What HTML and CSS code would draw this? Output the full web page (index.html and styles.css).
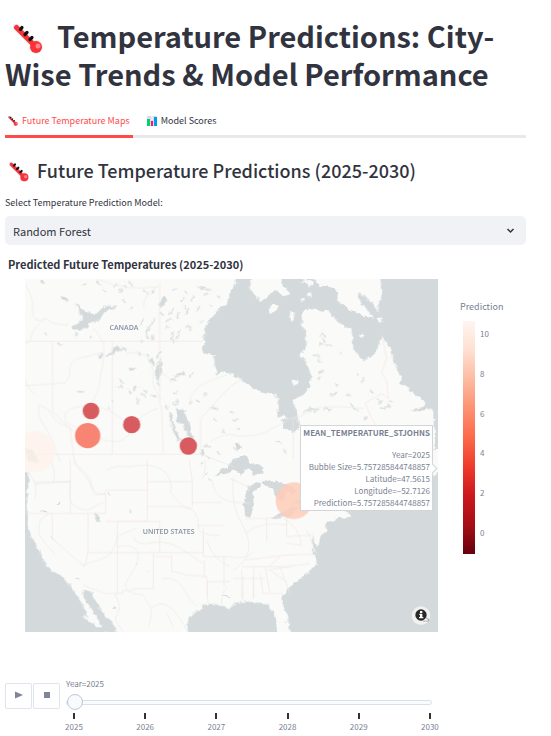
FILE: index.html
```html
<!DOCTYPE html>
<html lang="en">
<head>
<meta charset="utf-8">
<meta name="viewport" content="width=device-width, initial-scale=1">
<title>Temperature Predictions</title>
<link rel="stylesheet" href="styles.css">
</head>
<body>
<svg class="defs" width="0" height="0" aria-hidden="true">
  <symbol id="thermo" viewBox="0 0 30 30">
    <path d="M3 3L23 23" stroke="#ececee" stroke-width="7" stroke-linecap="round"/>
    <circle cx="23" cy="23" r="7" fill="#ececee"/>
    <path d="M3.500 3.500L23 23" stroke="#fa3138" stroke-width="5" stroke-linecap="round"/>
    <circle cx="23" cy="23" r="6" fill="#fa3138"/>
    <circle cx="25" cy="22" r="2.500" fill="#ff8389"/>
    <path d="M7.500 5.500l1.500-2M12 10.500l2-2M17 15.500l2-2" stroke="#111" stroke-width="3.200" stroke-linecap="round"/>
  </symbol>
</svg>
<main class="page">
  <h1 class="title"><svg class="title-icon" aria-hidden="true"><use href="#thermo"/></svg>Temperature Predictions: City-Wise Trends &amp; Model Performance</h1>

  <nav class="tabs" role="tablist">
    <button class="tab active" role="tab" aria-selected="true"><svg class="tab-icon" aria-hidden="true"><use href="#thermo"/></svg>Future Temperature Maps</button>
    <button class="tab" role="tab" aria-selected="false"><svg class="tab-icon" viewBox="0 0 10 10" aria-hidden="true"><path d="M0 0h10v10H0z" fill="#ded8e8"/><path d="M0 3h3v7H0z" fill="#00d26a"/><path d="M4 5h2v5H4z" fill="#f8117f"/><path d="M7 1h3v9H7z" fill="#009fe8"/><path d="M5 0v4" stroke="#fff"/></svg>Model Scores</button>
  </nav>

  <h2 class="section"><svg class="section-icon" aria-hidden="true"><use href="#thermo"/></svg>Future Temperature Predictions (2025-2030)</h2>

  <label class="field-label" for="model">Select Temperature Prediction Model:</label>
  <div class="select-wrap">
    <select id="model" class="select"><option>Random Forest</option></select>
    <svg class="chevron" viewBox="0 0 8 6" aria-hidden="true"><path d="M1 1l3 3 3-3" fill="none" stroke="#31333f" stroke-width="1.500"/></svg>
  </div>

  <h3 class="chart-title">Predicted Future Temperatures (2025-2030)</h3>
  <div class="chart">
    <div class="map">
      <svg class="map-art" viewBox="0 0 1239 1059" role="img" aria-label="Map of North America">
        <defs>
          <filter id="coast" x="0" y="0" width="1239" height="1059" filterUnits="userSpaceOnUse" color-interpolation-filters="sRGB">
            <feTurbulence type="fractalNoise" baseFrequency=".06" numOctaves="3" seed="4"/>
            <feDisplacementMap in="SourceGraphic" scale="16" xChannelSelector="R" yChannelSelector="G"/>
          </filter>
        </defs>
        <path d="M0 0H1239V1059H0z" fill="#fafaf8"/>
        <path d="M1225 0h14v420h-14zM1225 620h14v439h-14zM0 700h8v359H0zM0 1045h240v14H0zM820 1045h419v14H820z" class="water"/>
        <g filter="url(#coast)">
          <!-- Hudson Bay, Labrador Sea and Atlantic -->
          <g transform="translate(585 -12)">
            <path class="water" d="M45 0L48 25 30 50 22 85 0 100-20 120-40 150-50 185-52 235-20 240-10 298 20 290 50 305 80 325 110 345 165 360 175 372 172 420 190 445 215 475 230 465 237 450 230 410 218 375 250 360 270 335 274 300 260 265 240 240 258 215 258 180 247 150 245 120 258 103 290 105 325 108 345 130 365 150 395 165 400 220 430 258 450 245 470 230 485 180 510 220 520 260 545 310 540 325 575 350 615 380 608 395 570 412 630 400 644 410 644 500 640 600 560 640 480 660 385 700 380 712 390 727 350 730 320 745 318 765 300 790 292 820 286 800 275 785 278 820 290 865 265 895 235 915 205 940 188 965 190 995 205 1025 212 1100H700V0z"/>
            <path class="land" d="M102 0H180L192 35 207 50 195 65 165 45 145 62 120 82 108 60 95 50 85 35zM270 0H480L488 72 475 80 475 110 455 85 430 60 410 55 430 90 462 128 420 120 385 100 360 85 350 72 356 50 330 35 300 32zM143 102L160 86 177 88 170 105 150 117zM208 130L212 107 223 115 220 138zM262 58l8-4 2 12-7 2zM240 70l10-4 6 9-8 5zM242 18l30-4 10 12-12 12-8-10zM-10 0H50L40 25 14 35 22 75 0 93zM215 320l12-5 9 8-15 12zM420 178l8-4 2 10-8 5zM474 130l9-3 1 14-7 3zM175 428l18-7 7 10-6 8zM625 525L665 520V590L640 600z"/>
          </g>
          <!-- Pacific, Gulf of California and Gulf of Mexico -->
          <g class="water" transform="translate(-75 543)">
            <path d="M50 25L87 35 85 80 79 120 80 200 90 220 100 245 120 270 130 300 150 330 180 345 205 365 215 385 240 420 262 460 265 470 245 472 280 490 300 516 305 530H50zM250 390L275 395 290 430 310 460 345 500 350 530H320L290 470 265 435 250 410zM565 530L562 490 572 468 590 455 605 440 630 430 660 435 690 445 708 428 735 424 770 428 805 434 820 470 832 516 834 540zM75 -5L95 -25 110 -8 100 8 85 -2z"/>
            <path d="M565 530L562 485 600 450 820 450 840 530z"/>
          </g>
          <!-- Great Lakes -->
          <g class="water" transform="translate(585 423)">
            <path d="M-15 165L20 140 45 118 60 107 82 110 92 130 130 142 130 162 100 164 85 145 60 165 42 148 15 162zM75 290L72 240 85 200 112 187 125 190 100 218 100 268 90 290zM125 180L170 185 205 195 235 215 215 220 200 210 188 245 168 232 155 205 125 190zM150 292L180 280 220 265 242 260 205 290 165 298zM225 245L265 230 275 243 240 253zM190 0L210 5 235 25 225 38 205 35 190 20zM45 70l15-2 2 20-10 5z"/>
          </g>
          <!-- Inland lakes -->
          <g class="water" transform="translate(-75 -12)">
            <path d="M216 158L240 140 246 124 222 82 252 108 285 120 315 92 352 95 342 102 318 105 295 138 268 142 265 155 240 167 220 164zM315 244L340 220 352 210 358 218 385 222 350 230 325 244zM530 400L545 402 560 420 575 480 578 496 562 484 550 450 535 440 530 420zM505 410l10 5 8 40 20 40-8 4-18-35zM480 75l14-12 8 10-10 18-14 4zM465 300l8-28 12-12-3 40-10 20zM182 68l14-4 12 8-5 8zM448 252l10-4 6 25-10-8zM295 240l10-5 2 15-8 5zM385 285l10-10 12 4-10 10zM585 34l30 4 24 10-26-3zM535 300l14-15 4 10-12 8zM225 348l26 0-2 5-18-2zM75 520l20 5 20 30-10 10-28-30zM280 712l15 10 7 20-14-8zM600 525l10-4 5 15-10 10zM120 18l15-4 3 8-15 2z"/>
          </g>
          <g class="ponds" transform="translate(-75 -12)">
            <path d="M245 30l14-4M290 18l12 12M308 40l10 9M340 35l12-5M355 47l15-2M372 32l9 10M390 18l7 15M367 74l8 8M388 103l12-7M430 45l10 13M455 55l10-10M517 45l14-6M540 80l15-12M552 92l6 10M550 53l12 4M580 65l-7 14M610 60l14-5M625 85l12 7M650 68l14-2M520 100l-12 18M540 110l-9 18M565 100l-7 19M590 110l9-16M430 130l-10 24M447 150l-9 28M465 130l-14 24M480 112l8 10M437 175l10 16M500 140l14-7M494 162l12-8M520 172l-4 22M543 164l-12 12M535 178l-7 14M558 155l16 8M420 195l9 8M460 180l-4 16M515 190l7 12M600 142l8-7M135 172l3 10M175 205l10 3M225 178l9-2M270 189l4-7M372 225l10-8M412 235l10 7M440 238l7 5M480 230l-11 18M484 250l-14 20M357 312l12 12M362 330l6 12M351 334l7 1M384 345l8 12M400 345l10-10M425 358l14 9M410 367l6 12M434 344l7 9M454 358l12 8M470 324l9 6M510 320l18-8M523 304l18-8M520 350l10 4M550 290l4 12M580 295l-15 14M499 390l4 13M518 379l12 14M529 378l8 9M568 385l9-5M588 375l10 7M610 365l12-9M634 400l18-4M640 435l10 3M665 465l10 5M612 510l18 7M620 545l12 8M650 530l10 10M325 395l5 9M335 377l4 5M412 380l3 8"/>
            <path d="M960 180l18 4M975 210l20 2M955 208l14-2M970 190l5 12M940 240l20 5M955 250l5 12M955 295l18-6M952 310l15-4M1005 325l10 8M990 360l22-8M925 400l30 5M910 412l22-7M940 410l18-10M1070 295l8 10M1080 320l12-10M1110 345l10 10M1130 385l18-7M1140 400l25-5M1060 400l18 8M1130 370l10 13M1165 390l8 8M970 400l22 6M1090 430l14-5M690 410l8 2M700 440l14-8M710 460l10 4M850 525l8 7M900 510l10 12M830 500l12 5M700 515l10 12M1040 360l9 5M1050 385l10 12M1170 375l5 9M1020 230l7 8"/>
          </g>
          <g class="ponds" transform="translate(-75 543)"><path d="M120 152l20 3M172 133l10-4M327 98l5 8M391 152l1 8M157 230l2 8M230 355l6 6M600 12l8-4M613 42l6-5M627 54l2 8M340 444l8 1M185 446l3 4M410 312l3 3M440 332l3 1M670 406l16 4M856 485l6 2"/></g>
        </g>
        <!-- Rivers -->
        <g class="river" transform="translate(-75 -12)">
          <path d="M75 30Q100 60 98 105T138 130Q155 150 205 150M138 130Q95 155 90 200L75 205M280 160Q300 180 311 205Q315 250 300 310Q300 340 285 365Q280 390 240 395Q195 400 195 425Q190 445 225 455M310 235Q280 235 265 244Q210 250 209 280Q212 330 175 325Q110 330 75 332M75 310Q80 340 102 355M118 390Q110 420 125 440T158 500L180 560M118 390Q145 400 155 420T210 460L245 485M300 395Q340 410 370 435T385 480 345 500 300 490M405 440Q440 410 475 400M380 235Q430 225 447 255T458 320Q465 350 483 372M290 12Q380 50 475 35M470 35Q430 60 430 100M482 290L520 320M570 380Q570 330 680 300M630 500Q680 470 700 480T790 475Q840 450 872 430M872 430L900 425Q930 405 960 398T1090 400"/>
        </g>
        <g class="river" transform="translate(-75 543)">
          <path d="M85 35L105 70Q110 100 105 115M105 72L210 65M150 0Q170 30 160 65M212 60Q205 100 215 130Q250 160 275 145T315 125M235 20Q275 50 275 75T317 105M320 30Q350 15 380 20L440 15Q490 20 505 50T510 95Q540 140 575 147Q600 170 595 210M352 230Q370 220 410 205M352 230Q340 280 320 290T250 315M400 230Q410 260 460 248T570 285L610 310M350 260Q400 250 412 275T388 350 430 405Q440 430 455 445M120 190Q110 220 128 240T165 285M485 355Q530 350 550 385T590 440M445 500Q460 460 450 445M455 445Q475 425 500 435T565 516M635 60Q640 100 675 120L690 125M595 210Q620 230 660 225M620 240Q640 300 690 320M625 430Q620 390 622 365M665 435Q660 400 685 380M345 400L360 440 345 480 370 516M500 460L520 500M155 160Q120 170 118 190M605 60Q620 30 615 0"/>
          <path d="M700 55Q690 130 725 190T740 290Q720 320 700 330M735 220Q790 180 860 195M690 290Q740 300 760 275M850 175Q900 200 905 260M920 210L950 280M840 320L870 400M730 350L728 420M760 345L760 415M780 340L790 400M800 330L870 320"/>
        </g>
        <!-- Borders -->
        <g class="border" transform="translate(-75 -12)">
          <path d="M75 199H610M158 197V410L210 460 225 570M337 197V538M479 25V385L485 400 490 538M75 538H602V430L690 335 730 310M602 538L700 575M1130 455L1115 430 1095 385 1120 370 1145 355 1165 370 1160 320 1145 290 1160 250 1145 180M880 430V550"/>
        </g>
        <g class="border" transform="translate(-75 543)">
          <path d="M105 66L211 65M211 0V160M75 160H317V90H442M224 0L235 25 262 55 285 105 317 100M442 0V184H317M442 65H577M568 0L577 65V140M442 139H540L575 148M352 184V400M352 184H479V278M264 160V278H610V205M157 160V235L253 320 262 290V278M460 278V386H400V391H368V400H315L250 376M460 289H515V333L560 345 620 350 622 365H690M577 127H665M592 196H672M610 230V290H688M613 300V350M622 365V410M672 290V380"/>
          <path d="M690 55L755 85M690 125L750 130M735 300L860 285 940 282M725 320L860 320 930 310M700 355H795M735 175H800V245M800 175L860 170V230M860 230L940 225M840 290L805 320M725 330V415M761 320V415M790 400H850M795 320L810 400M810 330L860 365M860 250L900 255"/>
        </g>
        <!-- Prediction bubbles -->
        <g transform="translate(-75 -12)">
          <circle cx="105" cy="530" r="61" fill="#fff1ea" opacity=".75"/>
          <circle cx="263" cy="482" r="38" fill="#f88170" opacity=".97"/>
          <g fill="#d64f53" opacity=".93"><circle cx="273" cy="408" r="25"/><circle cx="395" cy="449" r="26"/><circle cx="565" cy="513" r="26"/></g>
          <circle cx="882" cy="677" r="55" fill="#fdccb9" opacity=".87"/>
          <circle cx="930" cy="632" r="26" fill="#f8a18b"/>
        </g>
        <g class="country"><text x="297" y="154">CANADA</text><text x="431" y="766">UNITED STATES</text></g>
        <circle cx="1188" cy="1010" r="28" fill="#f1f1ef"/>
        <circle cx="1188" cy="1008" r="17" fill="#292929"/>
        <path d="M1185 996h7v6h-7zM1183 1004h9v10h3v4h-13v-4h3v-6h-2z" fill="#fff"/>
        <path d="M1194 1026h17v-6h-6v-4" fill="#fff" stroke="#888" stroke-width="2"/>
      </svg>
      <div class="tooltip">
        <strong>MEAN_TEMPERATURE_STJOHNS</strong>
        <span>Year=2025</span>
        <span>Bubble Size=5.757285844748857</span>
        <span>Latitude=47.5615</span>
        <span>Longitude=−52.7126</span>
        <span>Prediction=5.757285844748857</span>
      </div>
    </div>
    <aside class="legend">
      <span class="legend-title">Prediction</span>
      <div class="scale">
        <div class="ramp"></div>
        <div class="scale-labels"><span>10</span><span>8</span><span>6</span><span>4</span><span>2</span><span>0</span></div>
      </div>
    </aside>
  </div>

  <div class="player">
    <div class="buttons">
      <button class="ctl" aria-label="Play"><svg viewBox="0 0 8 8" aria-hidden="true"><path d="M0 0.500l8 3.500-8 3.500z"/></svg></button>
      <button class="ctl" aria-label="Stop"><svg viewBox="0 0 8 8" aria-hidden="true"><path d="M1 1h6v6H1z"/></svg></button>
    </div>
    <div class="timeline">
      <label class="year" for="year">Year=2025</label>
      <input id="year" class="range" type="range" min="2025" max="2030" value="2025">
      <div class="ticks"><span>2025</span><span>2026</span><span>2027</span><span>2028</span><span>2029</span><span>2030</span></div>
    </div>
  </div>
</main>
</body>
</html>
```
FILE: styles.css
```css
* { box-sizing: border-box; }
body {
  margin: 0;
  background: #fff;
  color: #31333f;
  font-family: "Source Sans Pro", "Noto Sans CJK SC", "Noto Sans", sans-serif;
}
button, select, input { font: inherit; color: inherit; margin: 0; }
.defs { position: absolute; }
.page { padding: 16px 25px 0 5px; }

.title { margin: 0; font-size: 29px; line-height: 38px; font-weight: 700; }
.title-icon { width: 30px; height: 30px; margin: 0 14px 0 8px; vertical-align: -6px; }

.tabs {
  display: flex;
  gap: 11px;
  margin-top: 16px;
  border-bottom: 3px solid #e9e9eb;
}
.tab {
  display: flex;
  align-items: center;
  gap: 4px;
  padding: 3px 3px 4px;
  margin-bottom: -3px;
  border: 0;
  border-bottom: 3px solid transparent;
  background: none;
  font-size: 9px;
  line-height: 20px;
}
.tab.active { color: #ff4b4b; border-bottom-color: #ff4b4b; }
.tab-icon { width: 10px; height: 10px; }

.section { margin: 18px 0 0; font-size: 18px; line-height: 28px; font-weight: 500; }
.section-icon { width: 20px; height: 20px; margin: 0 8px 0 4px; vertical-align: -4px; }

.field-label { display: block; margin-top: 11px; font-size: 9px; line-height: 16px; }
.select-wrap { position: relative; margin-top: 5px; }
.select {
  display: block;
  width: 100%;
  height: 29px;
  padding: 0 8px;
  border: 0;
  border-radius: 5px;
  background: #f0f2f6;
  font-size: 11px;
  appearance: none;
}
.chevron { position: absolute; right: 11px; top: 12px; width: 9px; height: 6px; }

.chart-title { margin: 11px 0 0 3px; font-size: 11px; line-height: 16px; font-weight: 700; }
.chart { display: grid; grid-template-columns: 1fr 88px; margin: 7px 0 0 20px; }
.map { position: relative; overflow: hidden; }
.map-art { display: block; width: 100%; height: auto; }
.water { fill: #d4dadc; }
.land { fill: #fafaf8; }
.ponds { fill: none; stroke: #d4dadc; stroke-width: 4; }
.river { fill: none; stroke: #e8ebeb; stroke-width: 2; }
.border { fill: none; stroke: #f3e6e5; stroke-width: 2; }
.country { font: 600 21px "Open Sans", sans-serif; fill: #8492a2; text-anchor: middle; }
.tooltip {
  position: absolute;
  top: 146px;
  right: 5px;
  padding: 1px 2px 1px 2px;
  border: 1px solid #d3d6d9;
  background: #fff;
  color: #7a7f92;
  font-size: 8px;
  line-height: 12px;
  text-align: right;
}
.tooltip strong, .tooltip span { display: block; }
.tooltip strong { margin-bottom: 10px; }
.tooltip::after {
  content: "";
  position: absolute;
  right: -4px;
  top: 39px;
  width: 6px;
  height: 6px;
  border: solid #d3d6d9;
  border-width: 1px 1px 0 0;
  background: #fff;
  transform: rotate(45deg);
}

.legend { display: flex; flex-direction: column; padding: 20px 0 0 22px; color: #7a7f92; }
.legend-title { font-size: 9px; line-height: 16px; }
.scale { display: flex; gap: 5px; margin: 6px 0 0 3px; }
.ramp {
  width: 12px;
  height: 233px;
  background: linear-gradient(#fff5f0, #fee0d2 12.5%, #fcbba1 25%, #fc9272 37.5%, #fb6a4a 50%, #ef3b2c 62.5%, #cb181d 75%, #a50f15 87.5%, #67000d);
}
.scale-labels {
  display: flex;
  flex-direction: column;
  justify-content: space-between;
  height: 233px;
  padding: 7px 0 15px;
  font-size: 8px;
  line-height: 12px;
}

.player { display: flex; gap: 6px; margin-top: 46px; color: #7a7f92; }
.buttons { display: flex; gap: 1px; padding-top: 5px; }
.ctl {
  display: flex;
  align-items: center;
  justify-content: center;
  width: 27px;
  height: 26px;
  padding: 0 0 3px;
  border: 1px solid #dfe5ee;
  border-radius: 2px;
  background: #fff;
}
.ctl svg { width: 8px; height: 8px; fill: #7f849a; }
.timeline { flex: 1; margin-right: 94px; font-size: 8px; line-height: 12px; }
.year { display: block; }
.range {
  display: block;
  width: 100%;
  height: 16px;
  margin-top: 4px;
  appearance: none;
  background: none;
}
.range::-webkit-slider-runnable-track {
  height: 5px;
  border: 1px solid #d8e0ea;
  border-radius: 3px;
  background: #f8fafc;
}
.range::-webkit-slider-thumb {
  appearance: none;
  width: 16px;
  height: 16px;
  margin-top: -7px;
  border: 1px solid #bec8d9;
  border-radius: 50%;
  background: #f8fafc;
}
.ticks { display: flex; justify-content: space-between; margin: 3px -8px 0 -2px; }
.ticks span { width: 20px; text-align: center; }
.ticks span::before {
  content: "";
  display: block;
  width: 2px;
  height: 6px;
  margin: 0 auto 2px;
  background: #333;
}
```
